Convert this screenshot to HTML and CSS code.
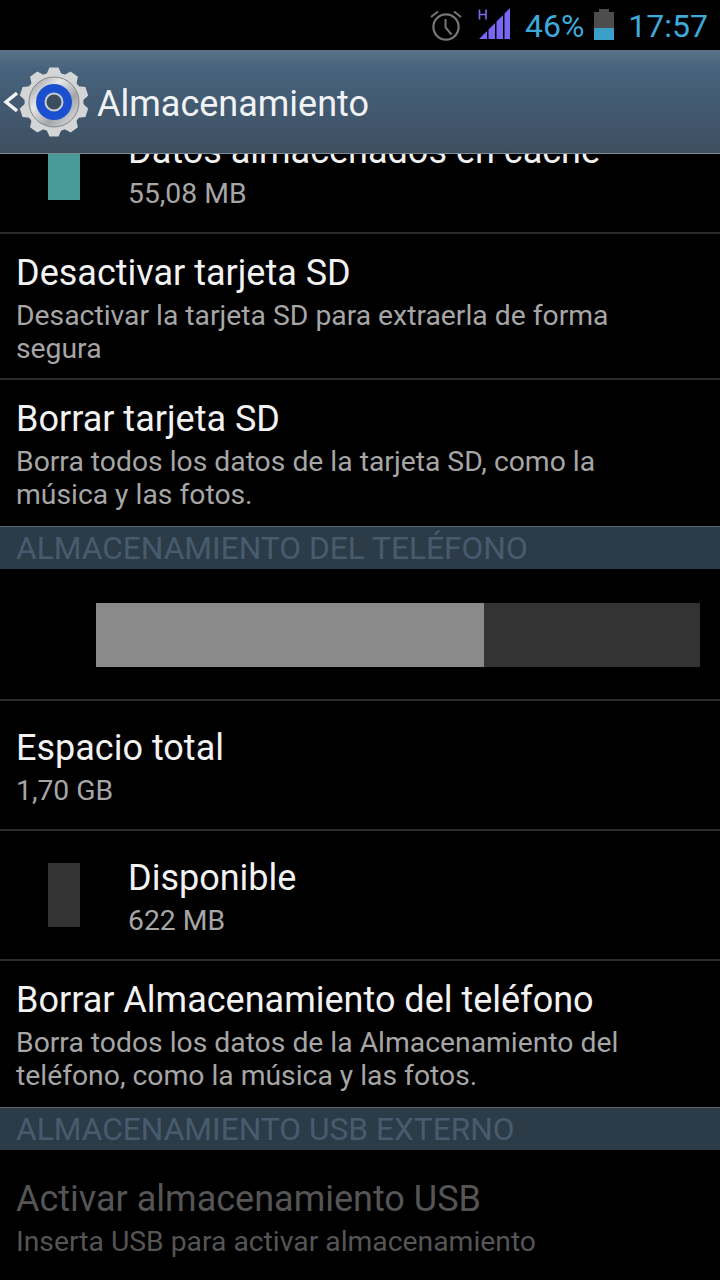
FILE: index.html
```html
<!DOCTYPE html>
<html lang="es">
<head>
    <meta charset="UTF-8">
    <meta name="viewport" content="width=device-width, initial-scale=1.0">
    <title>Almacenamiento</title>
    <link rel="stylesheet" href="styles.css">
</head>
<body>
    <div class="status-bar">
        <svg class="alarm" width="32" height="32" viewBox="0 0 32 32">
            <circle cx="16" cy="18" r="12.6" fill="none" stroke="#777" stroke-width="2.2"/>
            <path d="M15.5 10v8.5l6 7" fill="none" stroke="#777" stroke-width="2"/>
            <path d="M1 8 8 2.5M31 8 24 2.5" fill="none" stroke="#777" stroke-width="2"/>
        </svg>
        <svg class="signal" width="33" height="32" viewBox="0 0 33 32">
            <path d="M1.5 1.5V11.5M8 1.5V11.5M1.5 6.5H8" fill="none" stroke="#7a6cf0" stroke-width="1.6"/>
            <path d="M1 31 9 23V31ZM10.500 31V21.500L17 15V31ZM18.500 31V13.500L25 7V31ZM26.500 31V5.500L32 0V31Z" fill="#7a66f5"/>
        </svg>
        <span class="status-text">46%</span>
        <svg class="battery" width="20" height="31" viewBox="0 0 20 31">
            <path d="M5 0H15V3H20V31H0V3H5Z" fill="#4d4d4d"/>
            <rect y="19" width="20" height="12" fill="#3c9fc9"/>
        </svg>
        <span class="status-text clock">17:57</span>
    </div>

    <header class="action-bar">
        <svg class="back" width="16" height="26" viewBox="0 0 16 26">
            <path d="M15 4 4 13l11 9" fill="none" stroke="#f2f4f6" stroke-width="3.4"/>
        </svg>
        <svg class="gear" width="72" height="72" viewBox="0 0 72 72">
            <defs>
                <linearGradient id="gearMetal" x1="0" y1="0" x2="1" y2="1">
                    <stop offset="0" stop-color="#8f9396"/>
                    <stop offset="0.35" stop-color="#e6e7e8"/>
                    <stop offset="0.65" stop-color="#a4a7aa"/>
                    <stop offset="1" stop-color="#e8e9ea"/>
                </linearGradient>
                <path id="tooth" d="M31.500 1.500h9l4 9h-17z" fill="#d3d5d6"/>
            </defs>
            <use href="#tooth"/>
            <use href="#tooth" transform="rotate(36 36 36)"/>
            <use href="#tooth" transform="rotate(72 36 36)"/>
            <use href="#tooth" transform="rotate(108 36 36)"/>
            <use href="#tooth" transform="rotate(144 36 36)"/>
            <use href="#tooth" transform="rotate(180 36 36)"/>
            <use href="#tooth" transform="rotate(216 36 36)"/>
            <use href="#tooth" transform="rotate(252 36 36)"/>
            <use href="#tooth" transform="rotate(288 36 36)"/>
            <use href="#tooth" transform="rotate(324 36 36)"/>
            <circle cx="36" cy="36" r="29.500" fill="#d3d5d6"/>
            <circle cx="36" cy="36" r="25" fill="url(#gearMetal)" stroke="#85888b" stroke-width="1"/>
            <circle cx="36" cy="36" r="18" fill="#1a50d0"/>
            <circle cx="36" cy="36" r="8.500" fill="#3c4d5d" stroke="#c9ccd0" stroke-width="2"/>
        </svg>
        <h1 class="action-title">Almacenamiento</h1>
    </header>

    <main class="settings-list">
        <div class="row row-swatch">
            <span class="swatch swatch-teal"></span>
            <div>
                <div class="row-title">Datos almacenados en caché</div>
                <div class="row-sub">55,08 MB</div>
            </div>
        </div>
        <div class="row row-tall">
            <div class="row-title">Desactivar tarjeta SD</div>
            <div class="row-sub">Desactivar la tarjeta SD para extraerla de forma segura</div>
        </div>
        <div class="row row-tall no-line">
            <div class="row-title">Borrar tarjeta SD</div>
            <div class="row-sub">Borra todos los datos de la tarjeta SD, como la música y las fotos.</div>
        </div>
        <div class="section">ALMACENAMIENTO DEL TELÉFONO</div>
        <div class="usage-row">
            <div class="usage-bar">
                <span class="usage-used"></span>
            </div>
        </div>
        <div class="row">
            <div class="row-title">Espacio total</div>
            <div class="row-sub">1,70 GB</div>
        </div>
        <div class="row row-swatch">
            <span class="swatch swatch-dark"></span>
            <div>
                <div class="row-title">Disponible</div>
                <div class="row-sub">622 MB</div>
            </div>
        </div>
        <div class="row row-tall no-line">
            <div class="row-title">Borrar Almacenamiento del teléfono</div>
            <div class="row-sub">Borra todos los datos de la Almacenamiento del teléfono, como la música y las fotos.</div>
        </div>
        <div class="section">ALMACENAMIENTO USB EXTERNO</div>
        <div class="row disabled no-line">
            <div class="row-title">Activar almacenamiento USB</div>
            <div class="row-sub">Inserta USB para activar almacenamiento</div>
        </div>
    </main>
</body>
</html>
```

FILE: styles.css
```css
body {
    margin: 0;
    height: 1280px;
    overflow: hidden;
    background-color: #000;
    font-family: Roboto, "Liberation Sans", sans-serif;
    color: #fff;
}
.status-bar {
    height: 50px;
    box-sizing: border-box;
    padding: 8px 12px 0 0;
    display: flex;
    justify-content: flex-end;
    align-items: flex-start;
}
.alarm {
    margin-top: 1px;
    margin-right: 16px;
}
.signal {
    margin-right: 14px;
}
.battery {
    margin: 1px 14px 0 10px;
}
.status-text {
    font-size: 32px;
    line-height: 36px;
    color: #3fa9d9;
}
.action-bar {
    height: 104px;
    box-sizing: border-box;
    border-bottom: 1px solid #7d8b97;
    background: linear-gradient(#5a7388, #46627c 20%, #3e4f60 100%);
    display: flex;
    align-items: center;
    position: relative;
    z-index: 1;
}
.back {
    margin-left: 2px;
}
.gear {
    margin-right: 7px;
}
.action-title {
    margin: 4px 0 0;
    font-size: 36px;
    font-weight: 400;
    color: #f0f3f5;
}
.settings-list {
    margin-top: -50px;
}
.row {
    height: 130px;
    box-sizing: border-box;
    border-bottom: 2px solid #2b2b2b;
    padding: 21px 80px 0 16px;
}
.row-tall {
    height: 146px;
    padding-top: 13px;
}
.no-line {
    border-bottom: none;
}
.row-swatch {
    padding: 21px 16px 0 48px;
    display: flex;
    gap: 48px;
}
.row-title {
    font-size: 36px;
    line-height: 52px;
    color: #f2f2f2;
}
.row-sub {
    font-size: 28.3px;
    line-height: 33px;
    color: #a6a6a6;
}
.swatch {
    flex: none;
    margin-top: 11px;
    width: 32px;
    height: 64px;
}
.swatch-teal {
    background-color: #4a9a99;
}
.swatch-dark {
    background-color: #333;
}
.section {
    height: 43px;
    box-sizing: border-box;
    border-top: 1px solid #59646d;
    padding-left: 16px;
    background-color: #2b3b47;
    color: #485b6e;
    font-size: 31.7px;
    line-height: 43px;
}
.usage-row {
    height: 132px;
    box-sizing: border-box;
    border-bottom: 2px solid #2b2b2b;
    padding: 34px 20px 0 96px;
}
.usage-bar {
    height: 64px;
    background-color: #333;
}
.usage-used {
    display: block;
    width: 388px;
    height: 64px;
    background-color: #8a8a8a;
}
.disabled {
    padding-top: 23px;
}
.disabled .row-title,
.disabled .row-sub {
    color: #555;
}
```
